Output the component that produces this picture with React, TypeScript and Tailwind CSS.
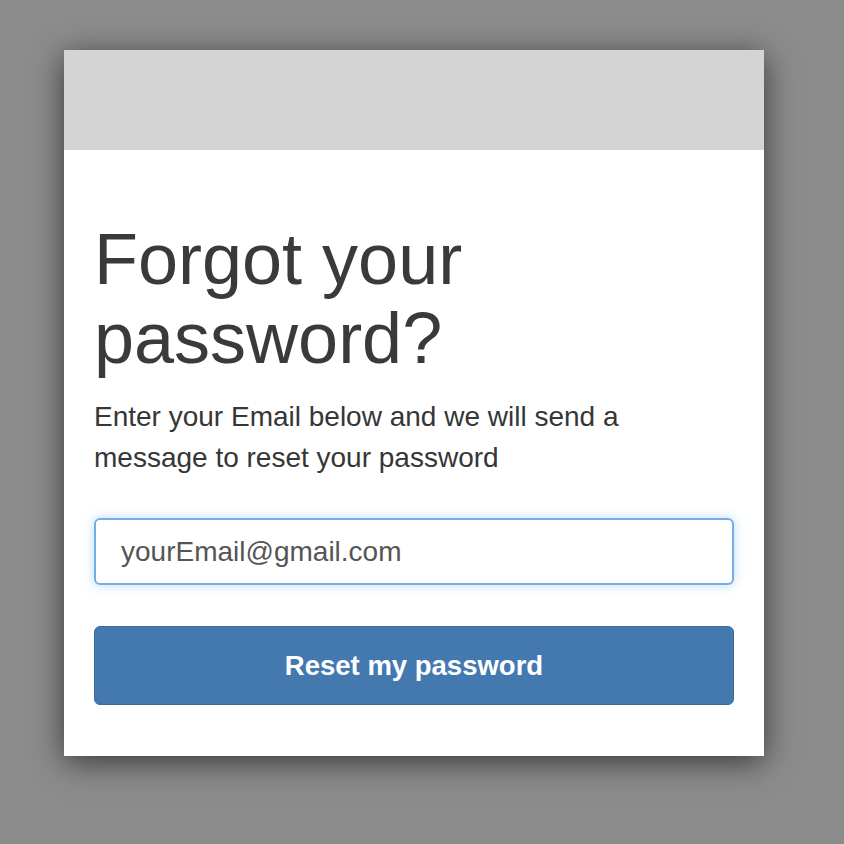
export default function App() {
  return (
    <div
      className="min-h-screen bg-[#8c8c8c] pl-[64px] pt-[50px]"
      style={{ fontFamily: "'Liberation Sans', Arial, sans-serif" }}
    >
      <div className="w-[700px] bg-white shadow-[0_6px_30px_rgba(0,0,0,0.6)]">
        {/* Header band */}
        <div className="h-[100px] bg-[#d4d4d4]" />

        <div className="px-[30px] pt-[70px] pb-[51px]">
          <h1 className="text-[72px] leading-[79px] text-[#3a3a3a]">
            Forgot your
            <br />
            password?
          </h1>
          <p className="mt-[18px] text-[28px] leading-[41px] text-[#363636]">
            Enter your Email below and we will send a
            <br />
            message to reset your password
          </p>

          <input
            type="email"
            defaultValue="yourEmail@gmail.com"
            className="mt-[40px] block h-[67px] w-full rounded-[6px] border-2 border-[#74ace3] px-[25px] text-[28px] text-[#555] shadow-[0_0_12px_rgba(102,175,233,0.45)] outline-none"
          />

          <button
            type="button"
            className="mt-[41px] block h-[79px] w-full rounded-[6px] border border-[#3b6b9c] bg-[#4479b0] text-[27.5px] font-bold text-white"
          >
            Reset my password
          </button>
        </div>
      </div>
    </div>
  )
}
